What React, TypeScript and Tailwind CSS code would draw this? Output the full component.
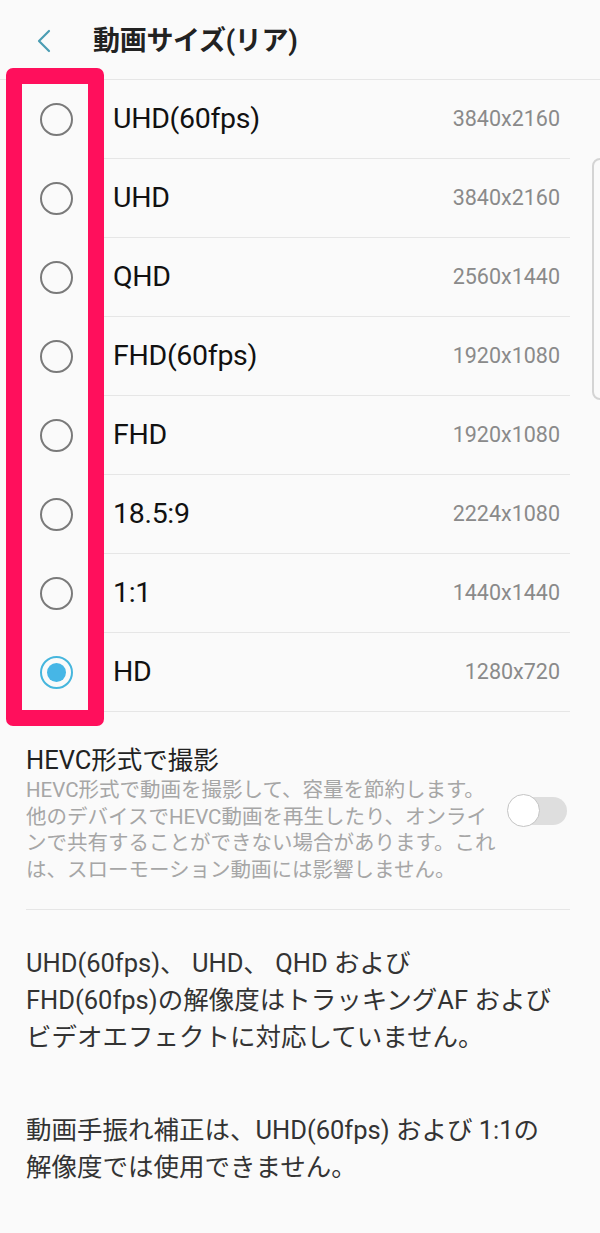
import React from 'react';

type SizeOption = {
  label: string;
  resolution: string;
};

const SIZE_OPTIONS: SizeOption[] = [
  { label: 'UHD(60fps)', resolution: '3840x2160' },
  { label: 'UHD', resolution: '3840x2160' },
  { label: 'QHD', resolution: '2560x1440' },
  { label: 'FHD(60fps)', resolution: '1920x1080' },
  { label: 'FHD', resolution: '1920x1080' },
  { label: '18.5:9', resolution: '2224x1080' },
  { label: '1:1', resolution: '1440x1440' },
  { label: 'HD', resolution: '1280x720' },
];

const FONT = "font-['Roboto','Noto_Sans_CJK_JP',sans-serif]";

function Radio({ checked }: { checked: boolean }) {
  if (checked) {
    return (
      <span className="flex h-[33px] w-[33px] items-center justify-center rounded-full border-2 border-[#46b6dd]">
        <span className="h-[19px] w-[19px] rounded-full bg-[#46b6e6]" />
      </span>
    );
  }
  return <span className="block h-[33px] w-[33px] rounded-full border-2 border-[#7a7a7a]" />;
}

export default function App() {
  const selected = 'HD';

  return (
    <div className={`${FONT} relative min-h-[1233px] w-[600px] overflow-hidden bg-[#fafafa] text-[#111]`}>
      {/* header */}
      <div className="flex h-[80px] items-center border-b border-[#e6e6e6] pt-[3px]">
        <svg className="ml-[36px] h-[24px] w-[16px]" viewBox="0 0 16 24" fill="none">
          <path d="M13 2 L3 12 L13 22" stroke="#4b9db3" strokeWidth="2.2" strokeLinecap="round" strokeLinejoin="round" />
        </svg>
        <h1 className="ml-[41px] text-[27px] font-bold tracking-[-0.3px] text-[#222]">動画サイズ(リア)</h1>
      </div>

      {/* options */}
      <div className="relative">
        {SIZE_OPTIONS.map((option) => (
          <div key={option.label} className="flex h-[79px] items-stretch">
            <div className="flex w-[97px] items-center pl-[40px]">
              <Radio checked={option.label === selected} />
            </div>
            <div className="mr-[30px] flex flex-1 items-center justify-between border-b border-[#e6e6e6] pl-[16px] pr-[10px]">
              <span className="text-[28.5px] tracking-[-0.3px] text-[#111]">{option.label}</span>
              <span className="text-[21.5px] text-[#8a8a8a]">{option.resolution}</span>
            </div>
          </div>
        ))}

        {/* highlight box */}
        <div className="pointer-events-none absolute left-[6px] top-[-12px] h-[658px] w-[98px] rounded-[7px] border-[16px] border-[#ff0f5c]" />
      </div>

      {/* scroll indicator */}
      <div className="absolute left-[592px] top-[158px] h-[242px] w-[20px] rounded-[8px] border-2 border-[#d4d4d4]" />

      {/* HEVC */}
      <div className="ml-[26px] mr-[30px] flex items-center border-b border-[#e6e6e6] pb-[26px] pt-[33px]">
        <div className="flex-1">
          <div className="text-[25.5px] leading-[30px] text-[#222]">HEVC形式で撮影</div>
          <p className="mt-[2px] text-[20.5px] leading-[26.5px] text-[#a6a6a6]">
            HEVC形式で動画を撮影して、容量を節約します。
            <br />
            他のデバイスでHEVC動画を再生したり、オンライ
            <br />
            ンで共有することができない場合があります。これ
            <br />
            は、スローモーション動画には影響しません。
          </p>
        </div>
        <div className="relative mb-[8px] mr-[3px] h-[33px] w-[60px] shrink-0">
          <div className="absolute left-[8px] top-[3px] h-[28px] w-[52px] rounded-full bg-[#dedede]" />
          <div className="absolute left-0 top-0 h-[33px] w-[33px] rounded-full border border-[#c4c4c4] bg-white" />
        </div>
      </div>

      {/* notes */}
      <div className="px-[26px] pt-[35px] text-[25.5px] leading-[37px] text-[#333]">
        <p>
          UHD(60fps)、 UHD、 QHD および
          <br />
          FHD(60fps)の解像度はトラッキングAF および
          <br />
          ビデオエフェクトに対応していません。
        </p>
        <p className="mt-[56px]">
          動画手振れ補正は、UHD(60fps) および 1:1の
          <br />
          解像度では使用できません。
        </p>
      </div>
    </div>
  );
}
